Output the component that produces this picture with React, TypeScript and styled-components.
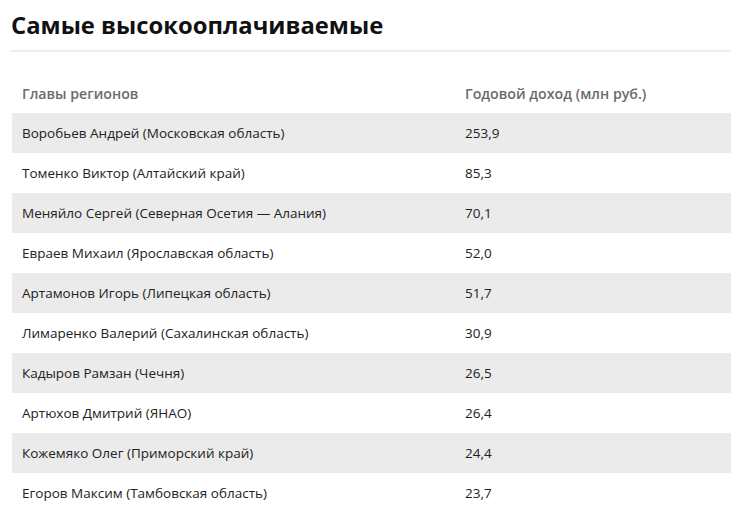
import React, {FC} from 'react';
import styled, {createGlobalStyle} from "styled-components";

type RowType = {
    name: string
    income: string
}

const rows: RowType[] = [
    {name: 'Воробьев Андрей (Московская область)', income: '253,9'},
    {name: 'Томенко Виктор (Алтайский край)', income: '85,3'},
    {name: 'Меняйло Сергей (Северная Осетия — Алания)', income: '70,1'},
    {name: 'Евраев Михаил (Ярославская область)', income: '52,0'},
    {name: 'Артамонов Игорь (Липецкая область)', income: '51,7'},
    {name: 'Лимаренко Валерий (Сахалинская область)', income: '30,9'},
    {name: 'Кадыров Рамзан (Чечня)', income: '26,5'},
    {name: 'Артюхов Дмитрий (ЯНАО)', income: '26,4'},
    {name: 'Кожемяко Олег (Приморский край)', income: '24,4'},
    {name: 'Егоров Максим (Тамбовская область)', income: '23,7'},
]

const GlobalStyle = createGlobalStyle`
  body {
    margin: 0;
    background: #fff;
    font-family: "Open Sans", "Noto Sans", sans-serif;
  }
`

const App: FC = () => {
    return (
        <StPage>
            <GlobalStyle/>
            <h2>Самые высокооплачиваемые</h2>
            <StTable>
                <thead>
                <tr>
                    <th className={'name'}>Главы регионов</th>
                    <th>Годовой доход (млн руб.)</th>
                </tr>
                </thead>
                <tbody>
                {rows.map((el, i) => <StRow key={el.name} odd={i % 2 === 0}>
                    <td className={'name'}>{el.name}</td>
                    <td>{el.income}</td>
                </StRow>)}
                </tbody>
            </StTable>
        </StPage>
    );
};

export default App

const StPage = styled.div`
  padding: 9px 14px 0 11px;
  width: 720px;
  & h2 {
    margin: 0;
    padding-bottom: 9px;
    border-bottom: 2px solid #eeeeee;
    font-size: 23.8px;
    line-height: 32px;
    font-weight: 700;
    color: #111;
  }
`

const StTable = styled.table`
  margin-top: 22px;
  margin-left: 1px;
  width: 719px;
  table-layout: fixed;
  border-collapse: collapse;
  font-size: 13.5px;
  & th, & td {
    height: 40px;
    padding: 0 0 0 10px;
    text-align: left;
    vertical-align: middle;
  }
  & th {
    color: #6b6b6b;
    font-weight: 600;
    font-size: 14.2px;
    height: 39px;
  }
  .name {
    width: 433px;
  }
`

const StRow = styled.tr<{ odd: boolean }>`
  background: ${props => props.odd ? '#ebebeb' : '#fff'};
  color: #222;
`
